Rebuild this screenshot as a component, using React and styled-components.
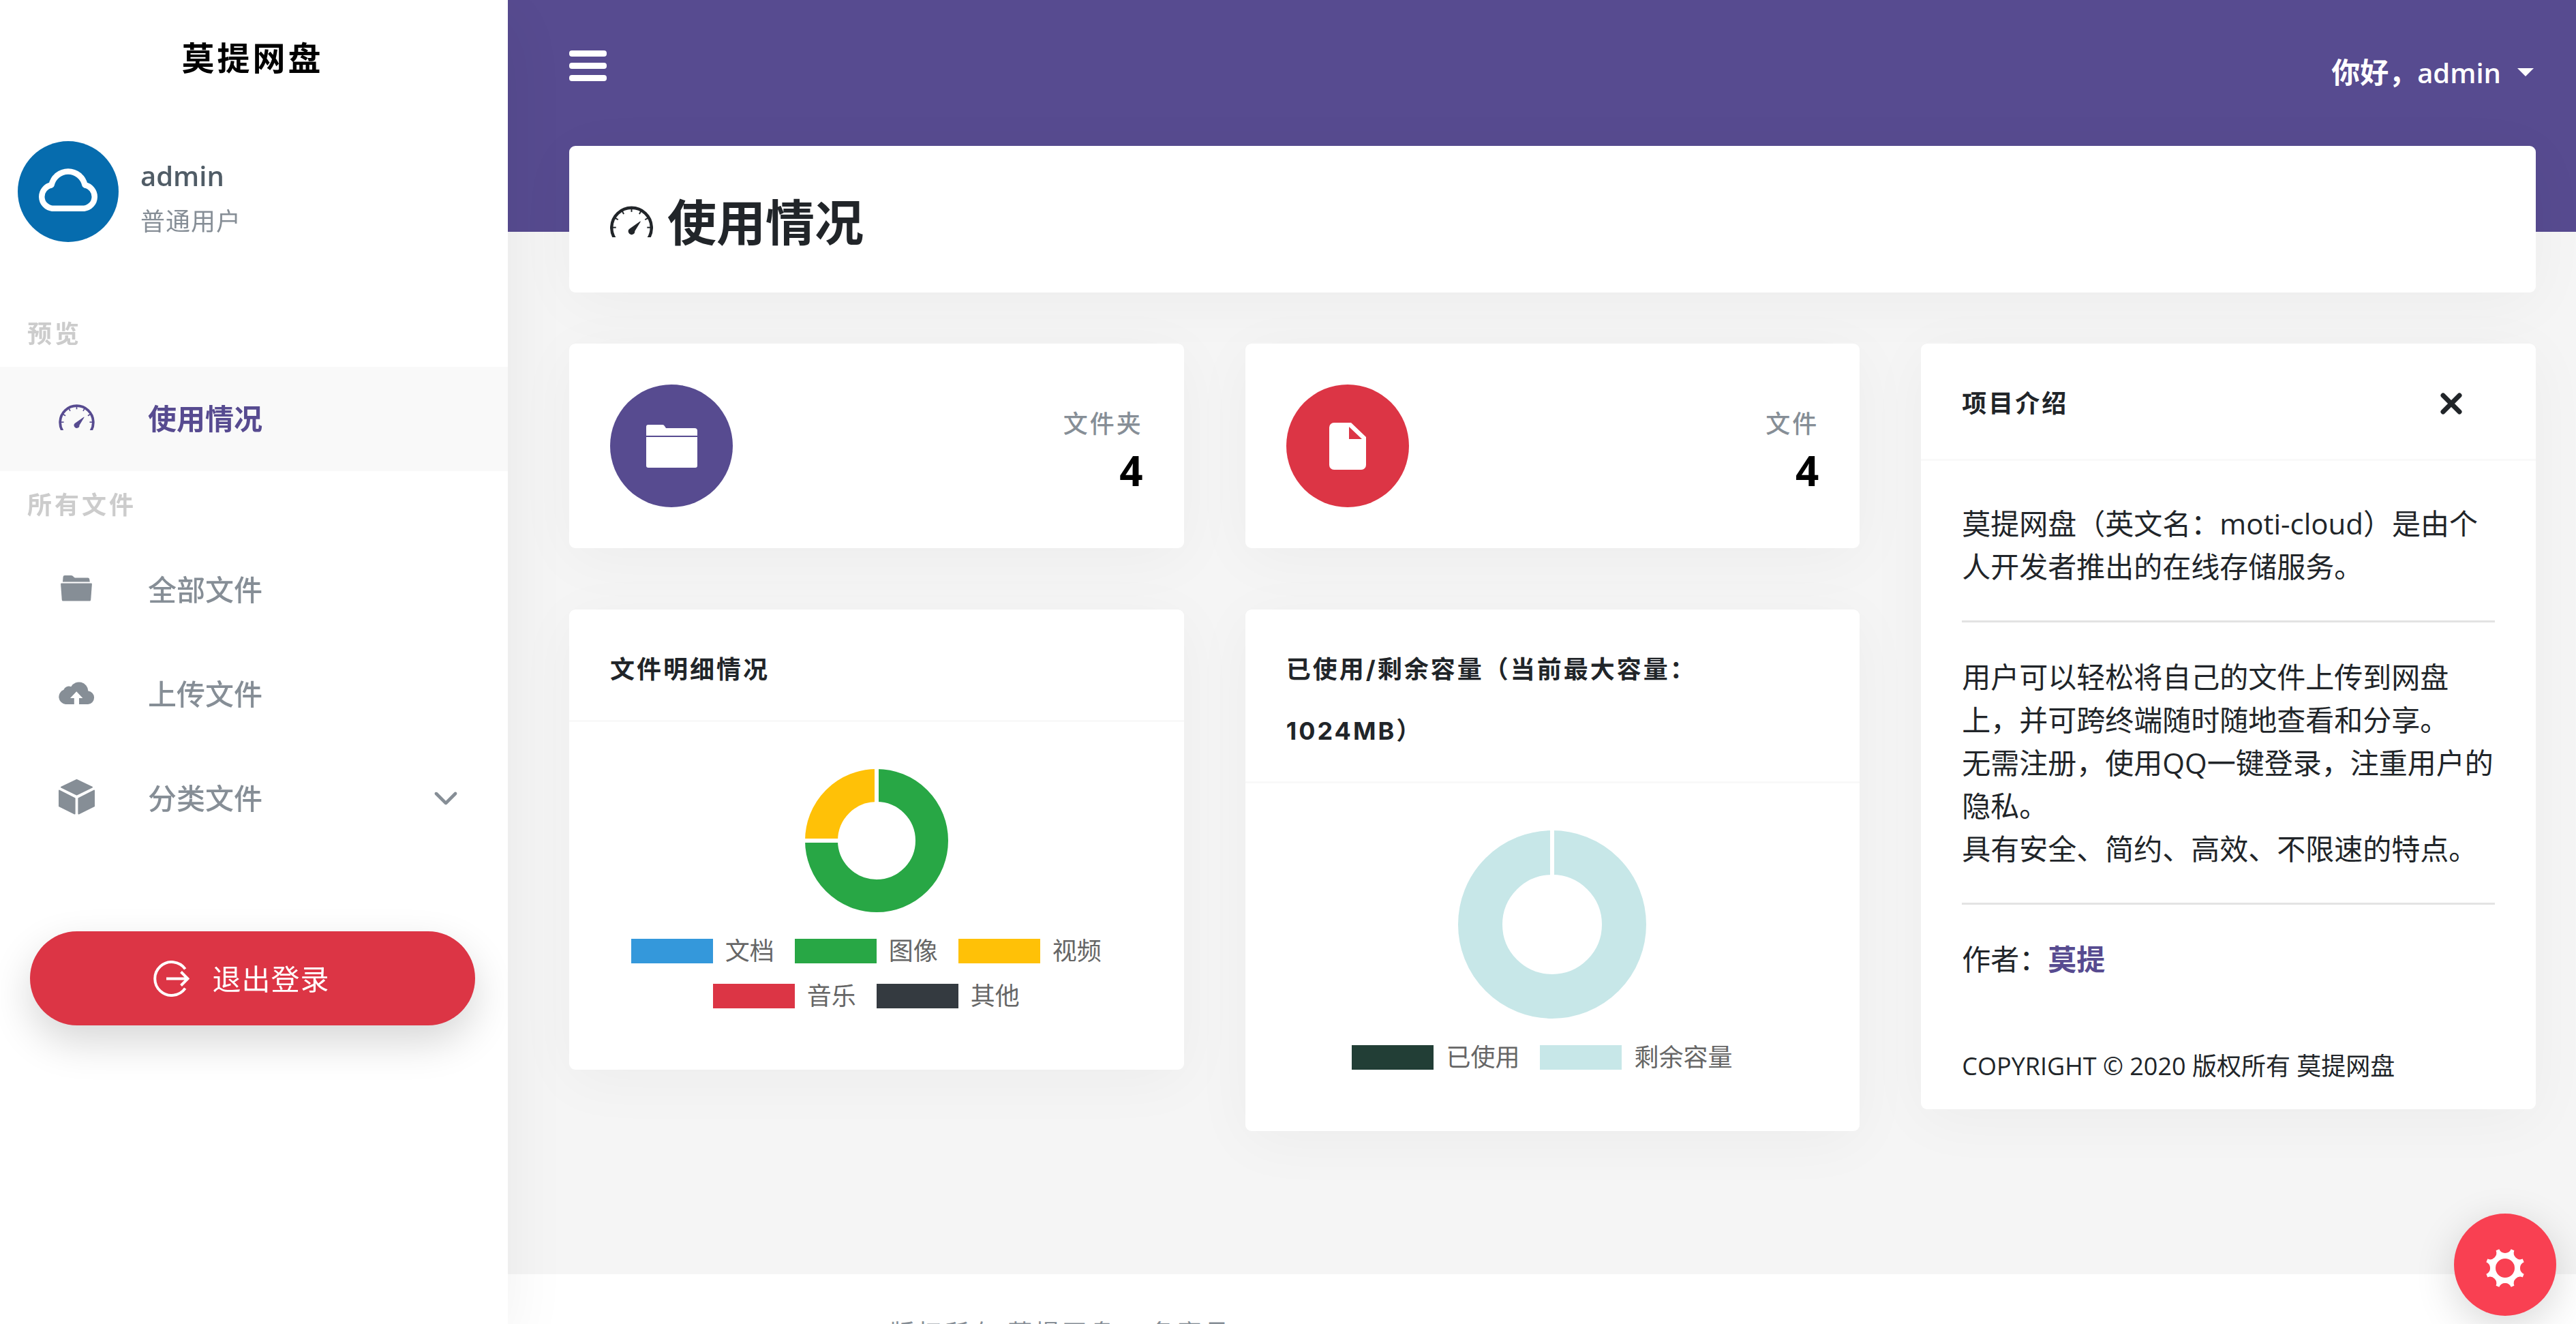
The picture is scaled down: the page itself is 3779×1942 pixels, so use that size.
import React from 'react'
import styled, { createGlobalStyle } from 'styled-components'
import { IoIosArrowDown } from 'react-icons/io'

const purple = '#574b90'
const red = '#dc3545'
const muted = '#868e96'
const ink = '#212529'

const fileTypes = [
  { label: '文档', value: 0, color: '#3498db' },
  { label: '图像', value: 3, color: '#28a745' },
  { label: '视频', value: 1, color: '#ffc107' },
  { label: '音乐', value: 0, color: red },
  { label: '其他', value: 0, color: '#343a40' },
]

const capacity = [
  { label: '已使用', value: 0, color: '#223e36' },
  { label: '剩余容量', value: 1024, color: '#c7e7e8' },
]

function polar(r, angle) {
  return `${(r * Math.sin(angle)).toFixed(2)} ${(-r * Math.cos(angle)).toFixed(2)}`
}

function Donut({ data, radius, hole, label }) {
  const total = data.reduce((sum, d) => sum + d.value, 0)
  const mid = (radius + hole) / 2
  let angle = 0
  const parts = data.filter((d) => d.value > 0).map((d) => {
    const start = angle
    angle += (d.value / total) * Math.PI * 2
    return { ...d, start, end: angle }
  })
  return (
    <svg
      width={radius * 2}
      height={radius * 2}
      viewBox={`${-radius} ${-radius} ${radius * 2} ${radius * 2}`}
      role='img'
      aria-label={label}
    >
      {parts.map((p) =>
        parts.length === 1 ? (
          <circle key={p.label} r={mid} fill='none' stroke={p.color} strokeWidth={radius - hole} />
        ) : (
          <path
            key={p.label}
            d={`M${polar(mid, p.start)} A${mid} ${mid} 0 ${p.end - p.start > Math.PI ? 1 : 0} 1 ${polar(mid, p.end)}`}
            fill='none'
            stroke={p.color}
            strokeWidth={radius - hole}
          />
        )
      )}
      {parts.map((p) => (
        <path
          key={p.label}
          d={`M${polar(hole - 3, p.start)} L${polar(radius + 3, p.start)}`}
          stroke='#fff'
          strokeWidth='6'
        />
      ))}
    </svg>
  )
}

function Chart({ data, radius, hole, label }) {
  return (
    <ChartBody>
      <Donut data={data} radius={radius} hole={hole} label={label} />
      <Legend>
        {data.map((d) => (
          <LegendItem key={d.label}>
            <Swatch $color={d.color} />
            {d.label}
          </LegendItem>
        ))}
      </Legend>
    </ChartBody>
  )
}

function CloudLogo() {
  return (
    <svg width='148' height='148' viewBox='0 0 148 148' aria-hidden='true'>
      <circle cx='74' cy='74' r='74' fill='#066cae' />
      <path
        d='M50.5 98.7H97.5A17.3 17.3 0 0 0 98.5 64.5A25 25 0 0 0 49.5 64.5A17.3 17.3 0 0 0 50.5 98.7Z'
        fill='none'
        stroke='#fff'
        strokeWidth='8.5'
        strokeLinejoin='round'
      />
    </svg>
  )
}

function GaugeGlyph({ width, height }) {
  const ticks = [-90, -60, -30, 0, 30, 60, 90]
  return (
    <svg width={width} height={height} viewBox='0 0 448 325' aria-hidden='true'>
      <g fill='none' stroke='currentColor'>
        <path d='M66 362A208 208 0 1 1 382 362' strokeWidth='32' />
        {ticks.map((t) => (
          <path key={t} d='M224 24V62' strokeWidth='14' transform={`rotate(${t} 224 224)`} />
        ))}
      </g>
      <path d='M312 160Q318 157 318 165L258 262A34 34 0 1 1 206 236Z' fill='currentColor' />
    </svg>
  )
}

function NavFolderGlyph() {
  return (
    <svg width='46' height='38' viewBox='0 0 46 38' fill='currentColor' aria-hidden='true'>
      <path d='M3 9.6L3.6 2Q3.8 0 6 0H15.5Q17.5 0 18.5 1.5T21 3.6H40Q42 3.6 42.2 5.4L42.8 9.6Z' />
      <path d='M1.2 11.4H44.8Q46 11.4 45.9 12.8L44.2 36Q44 37.6 42.6 37.6H3.4Q2 37.6 1.8 36L.1 12.8Q0 11.4 1.2 11.4Z' />
    </svg>
  )
}

function CloudUploadGlyph() {
  return (
    <svg width='53' height='34' viewBox='0 0 53 34' fill='currentColor' aria-hidden='true'>
      <path d='M10 34H22.8V24.9H17L26.2 15.3L35.4 24.9H30V34H43.2A9.8 9.8 0 0 0 43.4 14.5A13.5 13.5 0 0 0 18.2 8.2A8 8 0 0 0 7.4 12.8A11 11 0 0 0 10 34Z' />
    </svg>
  )
}

function CubeGlyph() {
  return (
    <svg
      width='53'
      height='52'
      viewBox='0 0 53 52'
      fill='currentColor'
      stroke='currentColor'
      strokeWidth='2'
      strokeLinejoin='round'
      aria-hidden='true'
    >
      <path d='M26.5 1L49 11.6L26.5 22.6L4 11.6Z' />
      <path d='M1 16.6L23.6 28.2V50.6L1 39.4Z' />
      <path d='M52 16.6L29.4 28.2V50.6L52 39.4Z' />
    </svg>
  )
}

function LogOutGlyph() {
  return (
    <svg width='53' height='53' viewBox='0 0 53 53' fill='none' stroke='currentColor' strokeWidth='4' aria-hidden='true'>
      <path d='M46.7 12.3A24.5 24.5 0 1 0 46.7 40.7' />
      <path d='M19 26.5H50M40.5 16.5L50.5 26.5L40.5 36.5' />
    </svg>
  )
}

function FolderGlyph() {
  return (
    <svg width='75' height='63' viewBox='0 0 75 63' fill='#fff' aria-hidden='true'>
      <path d='M0 16V3a3 3 0 0 1 3-3H24q2 0 3 2l2 3H71a4 4 0 0 1 4 4V16Z' />
      <path d='M0 18H75V60a3 3 0 0 1-3 3H3a3 3 0 0 1-3-3Z' />
    </svg>
  )
}

function FileGlyph() {
  return (
    <svg width='54' height='69' viewBox='0 0 54 69' fill='#fff' aria-hidden='true'>
      <path d='M7 0H32L54 21V62a7 7 0 0 1-7 7H7a7 7 0 0 1-7-7V7a7 7 0 0 1 7-7ZM29 6V24H48Z' fillRule='evenodd' />
    </svg>
  )
}

function GearGlyph() {
  const step = Math.PI / 4
  const half = 0.305
  let d = ''
  for (let i = 0; i < 8; i++) {
    d += `${i ? 'L' : 'M'}${polar(29, i * step - half)} A9.5 9.5 0 0 0 ${polar(29, i * step + half)} `
  }
  return (
    <svg width='60' height='60' viewBox='-30 -30 60 60' aria-hidden='true'>
      <path d={`${d}Z M0 -14A14 14 0 1 0 0 14A14 14 0 1 0 0 -14Z`} fill='#fff' fillRule='evenodd' />
    </svg>
  )
}

function App() {
  return (
    <>
      <GlobalStyle />
      <Shell>
        <Sidebar>
          <Brand>莫提网盘</Brand>
          <Profile>
            <CloudLogo />
            <div>
              <ProfileName>admin</ProfileName>
              <ProfileRole>普通用户</ProfileRole>
            </div>
          </Profile>
          <nav>
            <NavLabel>预览</NavLabel>
            <NavItem href='#usage' $active>
              <NavIcon><GaugeGlyph width='53' height='38' /></NavIcon>
              使用情况
            </NavItem>
            <NavLabel>所有文件</NavLabel>
            <NavItem href='#files'>
              <NavIcon><NavFolderGlyph /></NavIcon>
              全部文件
            </NavItem>
            <NavItem href='#upload'>
              <NavIcon><CloudUploadGlyph /></NavIcon>
              上传文件
            </NavItem>
            <NavItem href='#category'>
              <NavIcon><CubeGlyph /></NavIcon>
              分类文件
              <NavArrow />
            </NavItem>
          </nav>
          <Logout type='button'>
            <LogOutGlyph />
            退出登录
          </Logout>
        </Sidebar>

        <Main>
          <Content>
            <TopBar>
              <MenuButton type='button' aria-label='菜单'>
                <span />
                <span />
                <span />
              </MenuButton>
              <UserMenu type='button'>
                <span>你好，<UserName>admin</UserName></span>
                <Caret />
              </UserMenu>
            </TopBar>

            <PageTitle>
              <GaugeGlyph width='63' height='46' />
              <h1>使用情况</h1>
            </PageTitle>

            <Grid>
              <Column>
                <StatCard>
                  <StatIcon $color={purple}><FolderGlyph /></StatIcon>
                  <StatText>
                    <StatLabel>文件夹</StatLabel>
                    <StatValue>4</StatValue>
                  </StatText>
                </StatCard>
                <Card>
                  <CardHeader><h2>文件明细情况</h2></CardHeader>
                  <Chart data={fileTypes} radius={105} hole={57} label='文件明细情况' />
                </Card>
              </Column>

              <Column>
                <StatCard>
                  <StatIcon $color={red}><FileGlyph /></StatIcon>
                  <StatText>
                    <StatLabel>文件</StatLabel>
                    <StatValue>4</StatValue>
                  </StatText>
                </StatCard>
                <Card>
                  <CardHeader><h2>已使用/剩余容量（当前最大容量：1024MB）</h2></CardHeader>
                  <Chart data={capacity} radius={138} hole={73} label='已使用/剩余容量' />
                </Card>
              </Column>

              <Column>
                <Card>
                  <CardHeader>
                    <h2>项目介绍</h2>
                    <CloseButton type='button' aria-label='关闭'>
                      <svg width='32' height='32' viewBox='0 0 32 32' aria-hidden='true'>
                        <path d='M4 4L28 28M28 4L4 28' stroke={ink} strokeWidth='7' strokeLinecap='round' />
                      </svg>
                    </CloseButton>
                  </CardHeader>
                  <About>
                    <p>莫提网盘（英文名：moti-cloud）是由个人开发者推出的在线存储服务。</p>
                    <hr />
                    <p>用户可以轻松将自己的文件上传到网盘上，并可跨终端随时随地查看和分享。</p>
                    <p>无需注册，使用QQ一键登录，注重用户的隐私。</p>
                    <p>具有安全、简约、高效、不限速的特点。</p>
                    <hr />
                    <p>作者：<a href='#author'>莫提</a></p>
                  </About>
                  <CardFooter>COPYRIGHT © 2020 版权所有 莫提网盘</CardFooter>
                </Card>
              </Column>
            </Grid>
          </Content>
          <Footer>版权所有 莫提网盘 – 备案号</Footer>
        </Main>

        <Settings type='button' aria-label='设置'>
          <GearGlyph />
        </Settings>
      </Shell>
    </>
  )
}

const GlobalStyle = createGlobalStyle`
  *{
    box-sizing:border-box;
  }
  body{
    margin:0;
    color:${ink};
    font-family:'Open Sans','Noto Sans CJK SC',sans-serif;
    font-size:42px;
    line-height:63px;
    text-spacing-trim:space-all;
  }
  h1,h2,p{
    margin:0;
  }
  a{
    text-decoration:none;
  }
  button{
    border:0;
    padding:0;
    font:inherit;
    cursor:pointer;
  }
  svg{
    display:block;
    flex:none;
  }
`

const Shell = styled.div`
  display:flex;
  height:100vh;
  overflow:hidden;
`

const Sidebar = styled.aside`
  position:relative;
  z-index:1;
  flex:none;
  width:745px;
  background:#fff;
  box-shadow:0 30px 90px rgba(0,0,0,.06);
`

const Brand = styled.div`
  padding:50px 4px 50px 0;
  color:#000;
  font-size:48px;
  font-weight:600;
  line-height:70px;
  letter-spacing:4px;
  text-align:center;
`

const Profile = styled.div`
  display:flex;
  align-items:flex-end;
  gap:32px;
  padding:37px 26px 85px;
`

const ProfileName = styled.div`
  padding-bottom:4px;
  color:#505c66;
  font-size:40px;
  font-weight:600;
  line-height:66px;
`

const ProfileRole = styled.div`
  color:${muted};
  font-size:36px;
  line-height:60px;
  letter-spacing:1px;
`

const NavLabel = styled.div`
  padding:23px 40px 21px;
  color:#ccc;
  font-size:36px;
  font-weight:600;
  line-height:54px;
  letter-spacing:4px;
`

const NavItem = styled.a`
  display:flex;
  align-items:center;
  padding:44px 66px 46px 82px;
  background:${({ $active }) => ($active ? '#f9f9f9' : 'transparent')};
  color:${({ $active }) => ($active ? purple : muted)};
  font-weight:${({ $active }) => ($active ? 600 : 500)};
`

const NavIcon = styled.span`
  display:grid;
  place-items:center;
  width:60px;
  height:60px;
  margin-right:75px;
  padding-bottom:4px;
`

const NavArrow = styled(IoIosArrowDown)`
  width:50px;
  height:50px;
  margin-left:auto;
`

const Logout = styled.button`
  display:flex;
  align-items:center;
  justify-content:center;
  gap:33px;
  width:calc(100% - 92px);
  height:138px;
  margin:118px 48px 0 44px;
  padding-right:32px;
  border-radius:69px;
  background:${red};
  box-shadow:0 24px 60px rgba(0,0,0,.16);
  color:#fff;
  letter-spacing:1px;
`

const Main = styled.main`
  flex:1;
  min-width:0;
  overflow-y:auto;
  scrollbar-width:none;
  background:#f5f5f5;
`

const Content = styled.div`
  padding:0 59px 210px 90px;
  background:linear-gradient(${purple} 340px, transparent 340px);
`

const TopBar = styled.header`
  display:flex;
  align-items:flex-start;
  justify-content:space-between;
  height:214px;
  padding-top:74px;
`

const MenuButton = styled.button`
  display:grid;
  gap:9px;
  width:55px;
  background:none;
  span{
    height:9px;
    border-radius:4px;
    background:#fff;
  }
`

const UserMenu = styled.button`
  display:flex;
  align-items:center;
  gap:24px;
  padding-right:3px;
  background:none;
  color:#fff;
  font-weight:600;
`

const UserName = styled.span`
  font-size:40px;
`

const Caret = styled.span`
  border:12px solid transparent;
  border-top-color:#fff;
  border-bottom:0;
`

const Card = styled.section`
  border-radius:9px;
  background:#fff;
  box-shadow:0 15px 90px rgba(0,0,0,.04);
`

const PageTitle = styled(Card)`
  display:flex;
  align-items:center;
  gap:21px;
  height:215px;
  margin-bottom:75px;
  padding:6px 60px 0;
  h1{
    font-size:72px;
    font-weight:600;
    line-height:108px;
  }
`

const Grid = styled.div`
  display:grid;
  grid-template-columns:repeat(3,1fr);
  align-items:start;
  gap:90px;
`

const Column = styled.div`
  display:grid;
  gap:90px;
`

const StatCard = styled(Card)`
  display:flex;
  align-items:center;
  justify-content:space-between;
  padding:60px;
`

const StatIcon = styled.div`
  display:grid;
  place-items:center;
  width:180px;
  height:180px;
  border-radius:50%;
  background:${({ $color }) => $color};
`

const StatText = styled.div`
  padding-top:17px;
  text-align:right;
`

const StatLabel = styled.div`
  color:${muted};
  font-size:36px;
  font-weight:500;
  line-height:54px;
  letter-spacing:3px;
`

const StatValue = styled.div`
  color:#000;
  font-size:60px;
  font-weight:700;
  line-height:82px;
`

const CardHeader = styled.div`
  display:flex;
  align-items:flex-start;
  justify-content:space-between;
  padding:43px 60px 29px;
  border-bottom:3px solid #f9f9f9;
  h2{
    font-family:Inter,'Noto Sans CJK SC',sans-serif;
    font-size:36px;
    font-weight:700;
    line-height:90px;
    letter-spacing:3px;
  }
`

const CloseButton = styled.button`
  display:grid;
  place-items:center;
  height:90px;
  margin-bottom:7px;
  padding:0 48px;
  background:none;
`

const ChartBody = styled.div`
  display:flex;
  flex-direction:column;
  align-items:center;
  padding:69px 60px 81px;
`

const Legend = styled.ul`
  display:flex;
  flex-wrap:wrap;
  justify-content:center;
  row-gap:12px;
  margin:30px 0 0;
  padding:0;
  list-style:none;
`

const LegendItem = styled.li`
  display:flex;
  align-items:center;
  gap:18px;
  margin-right:30px;
  color:#666;
  font-size:36px;
  line-height:54px;
`

const Swatch = styled.span`
  width:120px;
  height:36px;
  background:${({ $color }) => $color};
`

const About = styled.div`
  padding:60px;
  hr{
    margin:48px 0;
    border:0;
    border-top:3px solid #e3e3e3;
  }
  a{
    color:${purple};
    font-weight:600;
  }
`

const CardFooter = styled.div`
  padding:39px 60px 36px;
  font-size:36px;
  line-height:54px;
`

const Footer = styled.footer`
  padding:60px 560px;
  background:#fff;
  color:${muted};
  font-size:36px;
  line-height:54px;
  letter-spacing:4px;
`

const Settings = styled.button`
  position:fixed;
  right:29px;
  bottom:12px;
  z-index:2;
  display:grid;
  place-items:center;
  width:150px;
  height:150px;
  padding-top:9px;
  border-radius:50%;
  background:#f94052;
  box-shadow:0 15px 60px rgba(0,0,0,.16);
`

export default App
